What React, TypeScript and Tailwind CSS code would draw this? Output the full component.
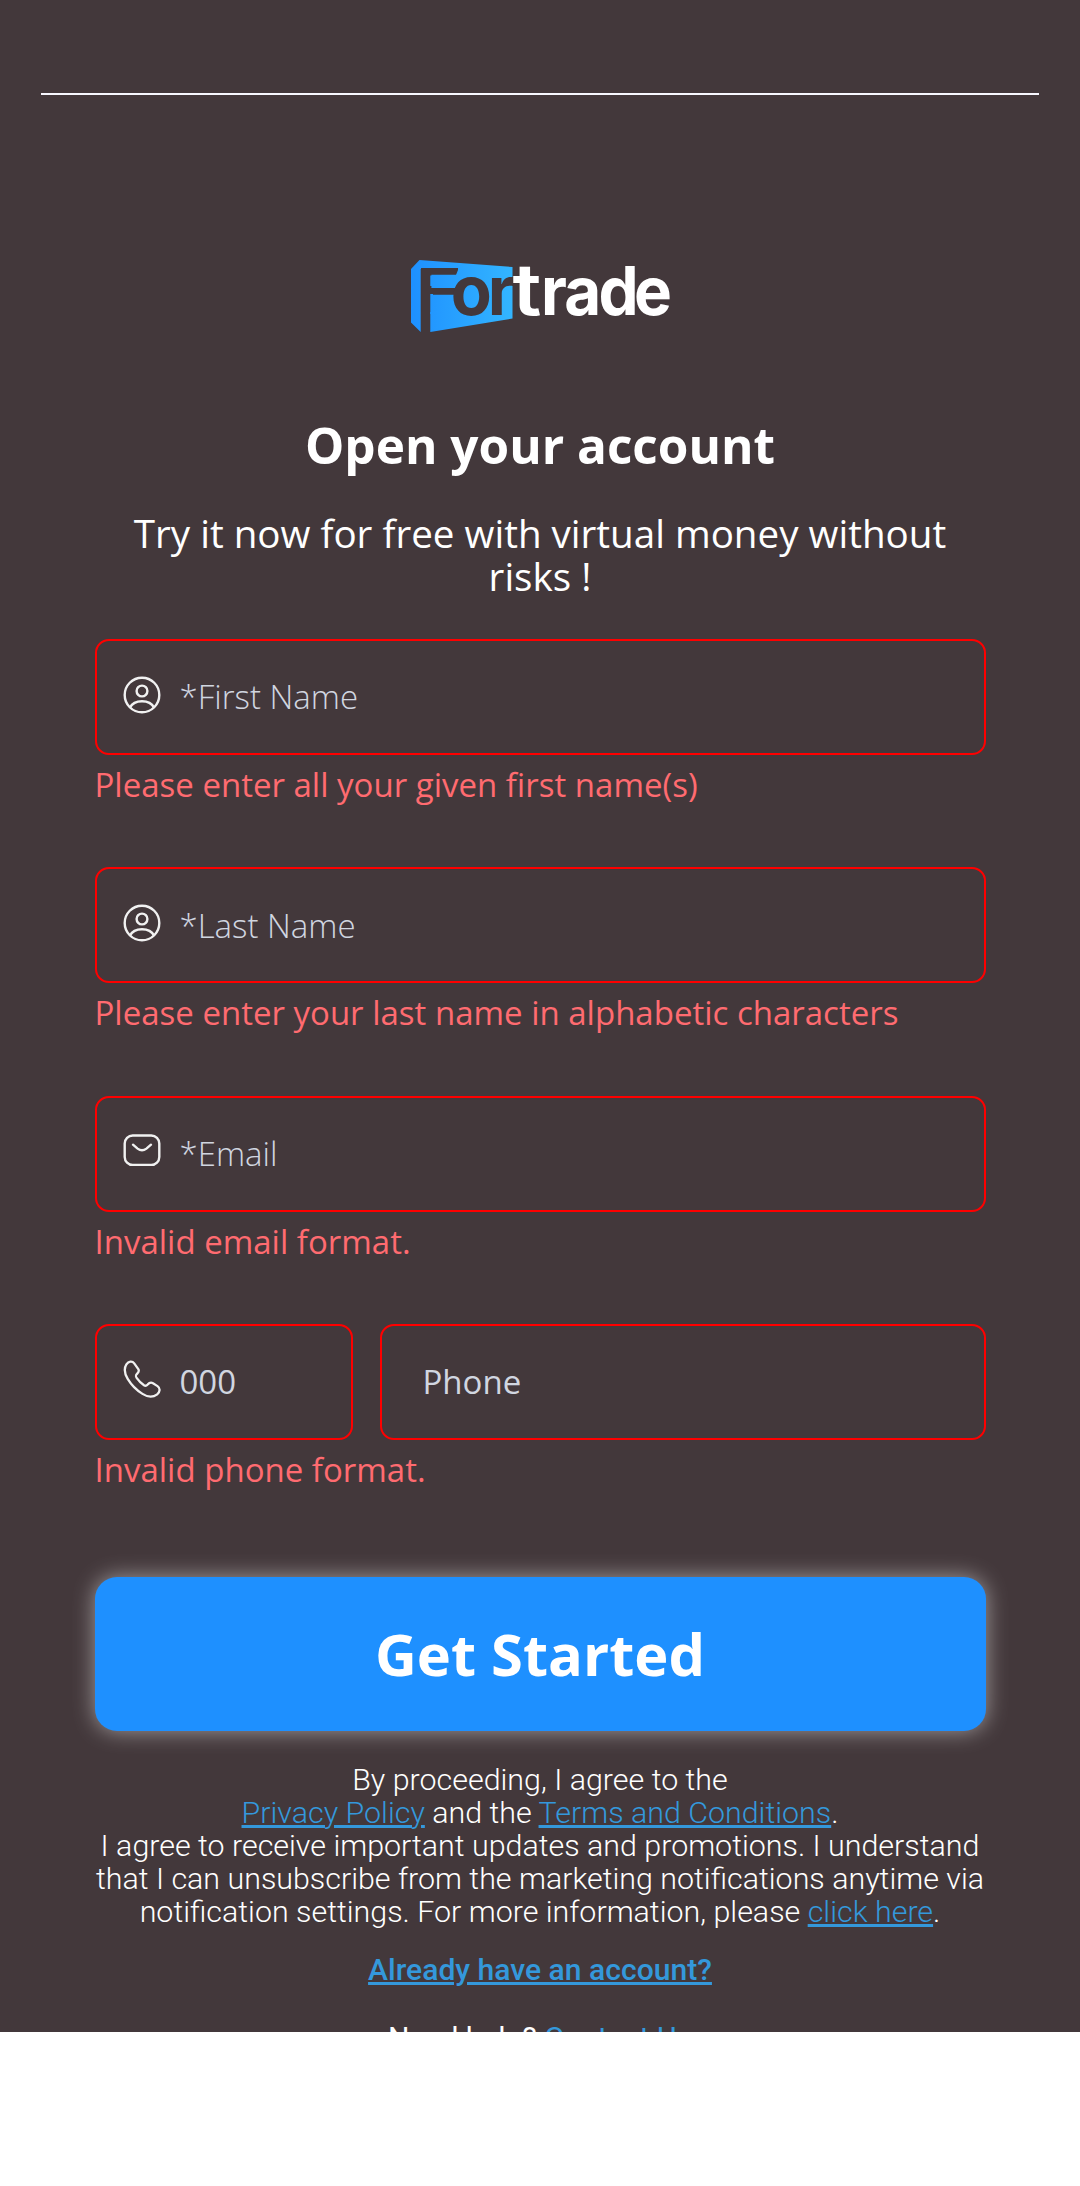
import React from "react";

function Logo() {
  return (
    <svg width="260" height="74" viewBox="0 0 260 74" className="block" role="img" aria-label="Fortrade">
      <defs>
        <linearGradient id="panel" gradientUnits="userSpaceOnUse" x1="0" y1="0" x2="101" y2="0">
          <stop offset="0" stopColor="#1e90ff" />
          <stop offset="1" stopColor="#33b5ff" />
        </linearGradient>
      </defs>
      <path d="M0 9 L8.5 0 L101.5 7 V58.5 L19.3 72 V9 H9.7 V72 L0 62.5Z" fill="url(#panel)" />
      <g fontFamily="Inter, sans-serif" fontWeight="700" fontSize="65">
        <text transform="translate(4.3 51.5) scale(1.26 0.97)" fill="#43383b" fontWeight="600" fontSize="63">
          F
        </text>
        <path d="M49.5 6V16.5H44.4L48.2 7ZM19.3 15.5H22V26H19.3ZM19.3 34H22V54H19.3Z" fill="url(#panel)" />
        <text transform="translate(0 55) scale(1.03 1.055)" x="38.6 74.6" fill="#43383b">
          or
        </text>
        <text transform="translate(101.5 55) scale(1.26 1.09)" fill="#ffffff" fontWeight="600">
          t
        </text>
        <text transform="translate(0 55) scale(0.98 1.04)" x="132.6 156.4 191.4 227.6" fill="#ffffff">
          rade
        </text>
      </g>
    </svg>
  );
}

function UserIcon() {
  return (
    <svg width="38" height="38" viewBox="0 0 38 38" fill="none" stroke="#f1f1f1" strokeWidth="2.4" className="block">
      <circle cx="19" cy="19" r="17.3" />
      <circle cx="19" cy="15" r="5.4" />
      <path d="M7 31.5C9 27.5 13.5 25.2 19 25.2S29 27.5 31 31.5" />
    </svg>
  );
}

function MailIcon() {
  return (
    <svg width="38" height="38" viewBox="0 0 38 38" fill="none" stroke="#f1f1f1" strokeWidth="2.4" strokeLinecap="round" className="block">
      <rect x="1.7" y="3.5" width="34.6" height="29.4" rx="8" />
      <path d="M10 12.7 14.6 16.6Q19 20.1 23.4 16.6L28 12.7" />
    </svg>
  );
}

function PhoneIcon() {
  return (
    <svg width="38" height="38" viewBox="0 0 38 38" fill="none" stroke="#f1f1f1" strokeWidth="2.3" strokeLinejoin="round" className="block">
      <path d="M3.4 4.4C5.5 1.2 9.3.8 11.2 3.4L15.3 9.2C16.5 11 15.8 12 14.2 13.6 12.6 15.2 12.3 16 13.8 18.1 16 21.2 18.4 23.5 21 25.3 23 26.6 23.7 25.6 24.6 24.6 26.3 22.6 27.7 21.9 30 23.2L34.5 26.1C37.6 28.2 37 32.2 34.2 34.3 30.6 37 25.2 37.5 19.5 33.9 13.4 30.1 8.6 25.4 4.7 18.9 1.2 13 1.1 8 3.4 4.4Z" />
    </svg>
  );
}

function Field({
  icon,
  placeholder,
  error,
}: {
  icon: React.ReactNode;
  placeholder: string;
  error: string;
}) {
  return (
    <div className="h-[228.3px]">
      <div className="flex h-[116px] rounded-[14px] border-2 border-[#ff0000] pl-[26px]">
        <div className="w-[57px] shrink-0 pt-[34.5px]">{icon}</div>
        <input
          placeholder={placeholder}
          className="w-full min-w-0 bg-transparent text-[33px] font-light outline-none placeholder:text-[#d1d6e0]"
        />
      </div>
      <ErrorText>{error}</ErrorText>
    </div>
  );
}

function ErrorText({ children }: { children: React.ReactNode }) {
  return <p className="mt-[7px] text-[33px] leading-[45px] text-[#ff6b70]">{children}</p>;
}

function Link({ children }: { children: React.ReactNode }) {
  return (
    <a href="#" className="text-[#3498db] underline decoration-[3px]">
      {children}
    </a>
  );
}

export default function App() {
  return (
    <div className="min-h-[2186px] bg-white font-['Open_Sans',sans-serif]">
      <main className="h-[2032px] overflow-hidden bg-[#43383b] text-white">
        <div className="mx-[41px] h-[95px] border-b-2 border-[#f8f8ff]" />
        <div className="mt-[165px] flex justify-center pl-[2px]">
          <Logo />
        </div>
        <h1 className="mt-[77px] text-center text-[49.5px] leading-[68px] font-bold">Open your account</h1>
        <p className="mx-auto mt-[33px] w-[850px] text-center text-[38.6px] leading-[43px]">
          Try it now for free with virtual money without risks !
        </p>
        <form className="mx-auto mt-[41px] w-[891px]">
          <Field icon={<UserIcon />} placeholder="*First Name" error="Please enter all your given first name(s)" />
          <Field icon={<UserIcon />} placeholder="*Last Name" error="Please enter your last name in alphabetic characters" />
          <Field icon={<MailIcon />} placeholder="*Email" error="Invalid email format." />
          <div className="h-[253px]">
            <div className="flex gap-[27px]">
              <div className="flex h-[116px] w-[258px] rounded-[14px] border-2 border-[#ff0000] pl-[26px]">
                <div className="w-[57px] shrink-0 pt-[34px]">
                  <PhoneIcon />
                </div>
                <input placeholder="000" className="w-full min-w-0 bg-transparent text-[33px] outline-none placeholder:text-[#d1d6e0]" />
              </div>
              <input
                placeholder="Phone"
                className="h-[116px] min-w-0 flex-1 rounded-[14px] border-2 border-[#ff0000] bg-transparent pl-[41px] text-[33px] outline-none placeholder:text-[#d1d6e0]"
              />
            </div>
            <ErrorText>Invalid phone format.</ErrorText>
          </div>
          <button
            type="button"
            className="block h-[154px] w-full rounded-[22px] bg-[#1e90ff] text-[57.8px] font-bold shadow-[0_0_22px_rgba(255,255,255,0.5)]"
          >
            Get Started
          </button>
        </form>
        <div className="mx-auto mt-[32px] w-[900px] text-center font-['Roboto',sans-serif] text-[30.4px] leading-[33px] font-light">
          <p>
            By proceeding, I agree to the
            <br />
            <Link>Privacy Policy</Link> and the <Link>Terms and Conditions</Link>.
            <br />
            I agree to receive important updates and promotions. I understand that I can unsubscribe from the marketing
            notifications anytime via notification settings. For more information, please <Link>click here</Link>.
          </p>
          <p className="mt-[25px] text-[30.1px] font-medium">
            <Link>Already have an account?</Link>
          </p>
          <p className="mt-[35px] text-[30.1px] font-normal">
            Need help? <Link>Contact Us</Link>
          </p>
        </div>
      </main>
    </div>
  );
}
